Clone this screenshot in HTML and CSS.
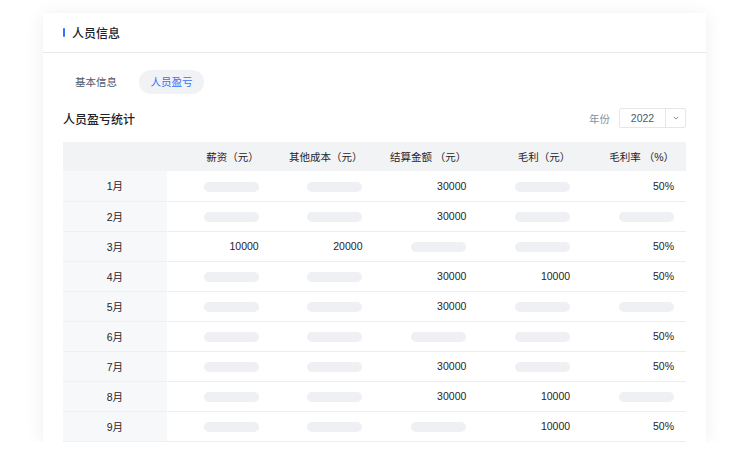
FILE: index.html
```html
<!DOCTYPE html>
<html lang="zh-CN">
<head>
<meta charset="utf-8">
<title>人员信息</title>
<link rel="stylesheet" href="styles.css">
</head>
<body>
<div class="card">
  <div class="card-header">
    <span class="bar"></span>
    <span class="card-title">人员信息</span>
  </div>
  <div class="card-body">
    <div class="tabs">
      <span class="tab">基本信息</span>
      <span class="tab active">人员盈亏</span>
    </div>
    <div class="section-row">
      <span class="section-title">人员盈亏统计</span>
      <div class="filter">
        <span class="filter-label">年份</span>
        <div class="select">
          <span class="select-value">2022</span>
          <span class="select-arrow">
            <svg width="6" height="4" viewBox="0 0 6 4"><path d="M0.8 0.8 L3 3 L5.2 0.8" fill="none" stroke="#86909c" stroke-width="1"/></svg>
          </span>
        </div>
      </div>
    </div>
    <table class="grid">
      <thead>
        <tr><th></th><th>薪资（元）</th><th>其他成本（元）</th><th>结算金额 （元）</th><th>毛利（元）</th><th>毛利率 （%）</th></tr>
      </thead>
      <tbody>
        <tr><td class="m">1月</td><td><i class="ph"></i></td><td><i class="ph"></i></td><td>30000</td><td><i class="ph"></i></td><td>50%</td></tr>
        <tr><td class="m">2月</td><td><i class="ph"></i></td><td><i class="ph"></i></td><td>30000</td><td><i class="ph"></i></td><td><i class="ph"></i></td></tr>
        <tr><td class="m">3月</td><td>10000</td><td>20000</td><td><i class="ph"></i></td><td><i class="ph"></i></td><td>50%</td></tr>
        <tr><td class="m">4月</td><td><i class="ph"></i></td><td><i class="ph"></i></td><td>30000</td><td>10000</td><td>50%</td></tr>
        <tr><td class="m">5月</td><td><i class="ph"></i></td><td><i class="ph"></i></td><td>30000</td><td><i class="ph"></i></td><td><i class="ph"></i></td></tr>
        <tr><td class="m">6月</td><td><i class="ph"></i></td><td><i class="ph"></i></td><td><i class="ph"></i></td><td><i class="ph"></i></td><td>50%</td></tr>
        <tr><td class="m">7月</td><td><i class="ph"></i></td><td><i class="ph"></i></td><td>30000</td><td><i class="ph"></i></td><td>50%</td></tr>
        <tr><td class="m">8月</td><td><i class="ph"></i></td><td><i class="ph"></i></td><td>30000</td><td>10000</td><td><i class="ph"></i></td></tr>
        <tr><td class="m">9月</td><td><i class="ph"></i></td><td><i class="ph"></i></td><td><i class="ph"></i></td><td>10000</td><td>50%</td></tr>
      </tbody>
    </table>
  </div>
</div>
</body>
</html>
```

FILE: styles.css
```css
* { box-sizing: border-box; }
html, body { margin: 0; padding: 0; background: #ffffff; }
body {
  font-family: "Liberation Sans", "Noto Sans CJK SC", sans-serif;
  color: #1f2329;
  padding: 13px 0 0 43px;
}
.card {
  width: 663px;
  background: #fff;
  box-shadow: 0 2px 18px rgba(0, 0, 0, 0.07);
  overflow: hidden;
}
.card-header {
  height: 40px;
  border-bottom: 1px solid #e8e9ec;
  display: flex;
  align-items: center;
  padding-left: 20px;
}
.bar {
  width: 2px;
  height: 9px;
  background: #3370ff;
  border-radius: 1px;
  margin-right: 7px;
}
.card-title {
  font-size: 12px;
  font-weight: 500;
  color: #1f2329;
}
.card-body {
  padding: 17px 20px 0 20px;
}
.tabs {
  display: flex;
  align-items: center;
  height: 24px;
}
.tab {
  font-size: 10.5px;
  color: #4e5969;
  height: 24px;
  line-height: 24px;
  padding: 0 12px;
  border-radius: 12px;
  margin-right: 10px;
}
.tab.active {
  background: #f0f2f5;
  color: #3370ff;
  width: 65px;
  text-align: center;
  padding: 0;
}
.section-row {
  display: flex;
  align-items: center;
  justify-content: space-between;
  margin-top: 14px;
  height: 20px;
}
.section-title {
  font-size: 12px;
  font-weight: 500;
  color: #1f2329;
}
.filter {
  display: flex;
  align-items: center;
}
.filter-label {
  font-size: 10.5px;
  color: #86909c;
  margin-right: 9px;
}
.select {
  display: flex;
  width: 67px;
  height: 20px;
  border: 1px solid #e5e6eb;
  border-radius: 2px;
}
.select-value {
  flex: 1;
  font-size: 10.5px;
  color: #4e5969;
  text-align: center;
  line-height: 18px;
  border-right: 1px solid #e5e6eb;
}
.select-arrow {
  width: 19px;
  display: flex;
  align-items: center;
  justify-content: center;
}
.grid {
  width: 623px;
  margin-top: 14px;
  border-collapse: collapse;
  table-layout: fixed;
  font-size: 10.5px;
}
.grid th {
  height: 29px;
  background: #f2f3f5;
  font-weight: 400;
  color: #1f2329;
  text-align: right;
  padding: 0 12px 0 0;
}
.grid td {
  height: 30px;
  border-bottom: 1px solid #ebedf0;
  text-align: right;
  padding: 0 12px 0 0;
  color: #1f2329;
}
.grid td.m {
  background: #f7f8fa;
  text-align: center;
  padding: 0;
  color: #1f2329;
  border-bottom-color: #eef0f3;
}
.ph {
  display: inline-block;
  width: 55px;
  height: 10px;
  border-radius: 5px;
  background: #eff0f3;
  vertical-align: middle;
}
```
